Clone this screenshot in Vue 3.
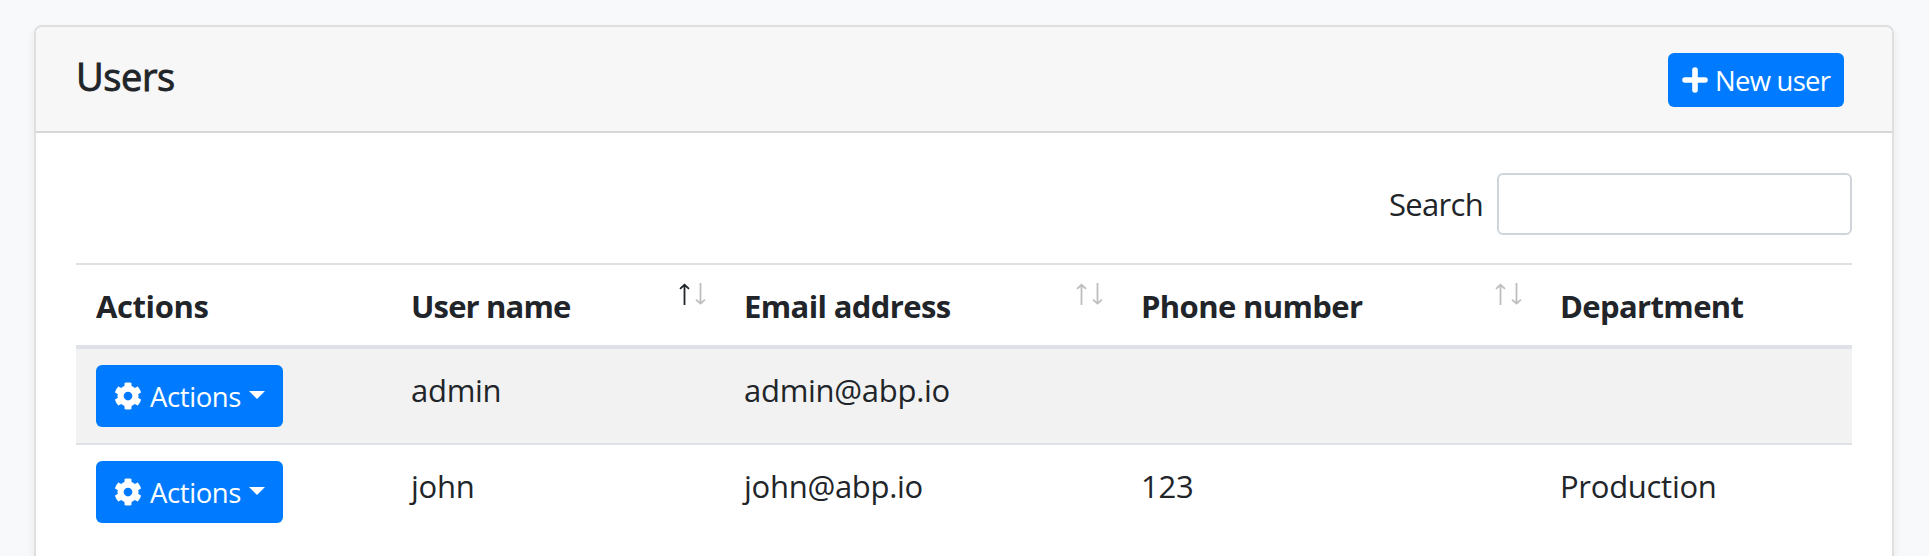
<script setup>
const columns = [
  { label: 'Actions', key: 'actions' },
  { label: 'User name', key: 'name', sort: 'asc' },
  { label: 'Email address', key: 'email', sort: 'none' },
  { label: 'Phone number', key: 'phone', sort: 'none' },
  { label: 'Department', key: 'department' },
]
const users = [
  { name: 'admin', email: 'admin@abp.io', phone: '', department: '' },
  { name: 'john', email: 'john@abp.io', phone: '123', department: 'Production' },
]
</script>

<template>
  <main class="page">
    <section class="card">
      <header class="card-header">
        <h5 class="title">Users</h5>
        <button class="btn btn-new" type="button">
          <svg class="plus" viewBox="0 0 26 26">
            <path d="M13 3V23M3 13H23" />
          </svg>
          <span class="new-label">New user</span>
        </button>
      </header>
      <div class="card-body">
        <label class="search">
          <span class="search-label">Search</span>
          <input class="search-input" type="text" />
        </label>
        <table class="table">
          <colgroup>
            <col class="c-actions" /><col class="c-name" /><col class="c-email" /><col class="c-phone" /><col />
          </colgroup>
          <thead>
            <tr>
              <th v-for="c in columns" :key="c.key">
                <div class="head-cell">
                  <span :class="'h-' + c.key">{{ c.label }}</span>
                  <svg v-if="c.sort" class="sort" viewBox="0 0 28 24">
                    <path :class="{ on: c.sort === 'asc' }" d="M5.5 23V3M1 6.8L5.5 2.8L10 6.8" />
                    <path d="M21.5 1V21M17 17.6L21.5 21.6L26 17.6" />
                  </svg>
                </div>
              </th>
            </tr>
          </thead>
          <tbody>
            <tr v-for="u in users" :key="u.name">
              <td>
                <button class="btn btn-actions" type="button">
                  <svg class="cog" viewBox="0 0 512 512">
                    <path d="M487.4 315.7l-42.6-24.6c4.3-23.2 4.3-47 0-70.2l42.6-24.6c4.9-2.8 7.1-8.6 5.5-14-11.1-35.6-30-67.8-54.7-94.6-3.8-4.1-10-5.1-14.8-2.3L380.8 110c-17.9-15.4-38.5-27.3-60.8-35.1V25.8c0-5.6-3.9-10.5-9.4-11.7-36.7-8.2-74.3-7.8-109.2 0-5.5 1.2-9.4 6.1-9.4 11.7V75c-22.2 7.9-42.8 19.8-60.8 35.1L88.7 85.5c-4.9-2.8-11-1.9-14.8 2.3-24.7 26.7-43.6 58.9-54.7 94.6-1.7 5.4.6 11.2 5.5 14L67.3 221c-4.3 23.2-4.3 47 0 70.2l-42.6 24.6c-4.9 2.8-7.1 8.6-5.5 14 11.1 35.6 30 67.8 54.7 94.6 3.8 4.1 10 5.1 14.8 2.3l42.6-24.6c17.9 15.4 38.5 27.3 60.8 35.1v49.2c0 5.6 3.9 10.5 9.4 11.7 36.7 8.2 74.3 7.8 109.2 0 5.5-1.2 9.4-6.1 9.4-11.7v-49.2c22.2-7.9 42.8-19.8 60.8-35.1l42.6 24.6c4.9 2.8 11 1.9 14.8-2.3 24.7-26.7 43.6-58.9 54.7-94.6 1.5-5.5-.7-11.3-5.6-14.1zM256 336c-44.1 0-80-35.9-80-80s35.9-80 80-80 80 35.9 80 80-35.9 80-80 80z" />
                  </svg>
                  <span class="act-label">Actions</span>
                  <i class="caret"></i>
                </button>
              </td>
              <td><div class="text">{{ u.name }}</div></td>
              <td><div class="text">{{ u.email }}</div></td>
              <td><div class="text">{{ u.phone }}</div></td>
              <td><div class="text">{{ u.department }}</div></td>
            </tr>
          </tbody>
        </table>
      </div>
    </section>
  </main>
</template>

<style>
html,
body {
  background: #f8f9fb;
  overflow: hidden;
}
</style>

<style scoped>
* {
  box-sizing: border-box;
}
.page {
  height: 556px;
  overflow: hidden;
  padding: 25px 35px 0 34px;
  color: #212529;
  font: 31px/48px 'Open Sans', 'Noto Sans', sans-serif;
}
.card {
  height: 620px;
  border: 2px solid #dfdfdf;
  border-radius: 8px;
  background: #fff;
  box-shadow: 0 4px 8px rgba(0, 0, 0, 0.075);
}
.card-header {
  display: flex;
  justify-content: space-between;
  align-items: flex-start;
  height: 106px;
  padding: 24px 48px 0 40px;
  border-bottom: 2px solid #d8d8d8;
  border-radius: 6px 6px 0 0;
  background: #f7f7f7;
}
.title {
  margin: 0;
  font-size: 38px;
  line-height: 50px;
  font-weight: 500;
  letter-spacing: -0.4px;
  -webkit-text-stroke: 0.9px #212529;
}
.btn {
  display: flex;
  align-items: center;
  margin: 0;
  border: 0;
  border-radius: 6px;
  background: #007bff;
  color: #fff;
  font: 27.5px/42px 'Open Sans', 'Noto Sans', sans-serif;
  white-space: nowrap;
}
.btn-new {
  width: 176px;
  height: 54px;
  margin-top: 2px;
  padding: 0 0 0 14px;
}
.plus {
  width: 26px;
  height: 26px;
  margin-right: 7px;
  fill: none;
  stroke: #fff;
  stroke-width: 5.6;
  stroke-linecap: round;
}
.new-label {
  padding-top: 2px;
  letter-spacing: -0.75px;
}
.card-body {
  padding: 40px;
}
.search {
  display: flex;
  justify-content: flex-end;
  align-items: center;
  height: 62px;
}
.search-label {
  margin-right: 14px;
  letter-spacing: -0.7px;
}
.search-input {
  width: 355px;
  height: 62px;
  border: 2px solid #ced4da;
  border-radius: 6px;
  background: #fff;
}
.table {
  width: 1776px;
  margin-top: 28px;
  table-layout: fixed;
  border-collapse: separate;
  border-spacing: 0;
}
.c-actions { width: 314px; }
.c-name { width: 333px; }
.c-email { width: 397px; }
.c-phone { width: 419px; }
th,
td {
  padding: 0 0 0 20px;
  text-align: left;
  vertical-align: top;
}
th + th,
td + td {
  padding-left: 21px;
}
th {
  height: 86px;
  border-top: 2px solid #dee2e6;
  border-bottom: 4px solid #dee2e6;
}
.head-cell {
  display: flex;
  justify-content: space-between;
  padding: 17px 16px 0 0;
  font-weight: 700;
  white-space: nowrap;
  letter-spacing: -0.63px;
}
.h-actions {
  letter-spacing: -0.4px;
}
.h-name {
  letter-spacing: -0.85px;
}
.sort {
  width: 28px;
  height: 24px;
  fill: none;
  stroke: #bdbebf;
  stroke-width: 1.8;
}
.sort .on {
  stroke: #212529;
}
td {
  height: 94px;
  padding-top: 16px;
}
.text {
  padding-top: 1px;
  letter-spacing: -0.28px;
}
tbody tr:first-child td {
  background: #f2f2f2;
}
tbody tr + tr td {
  height: 96px;
  border-top: 2px solid #dee2e6;
}
.btn-actions {
  width: 187px;
  height: 62px;
  padding: 0 0 0 18px;
}
.cog {
  width: 28px;
  height: 28px;
  margin-right: 8px;
  fill: #fff;
}
.act-label {
  padding-top: 2px;
  letter-spacing: -0.4px;
}
.caret {
  margin: -2px 0 0 8px;
  border: 8px solid transparent;
  border-top-color: #fff;
  border-bottom: 0;
}
</style>
